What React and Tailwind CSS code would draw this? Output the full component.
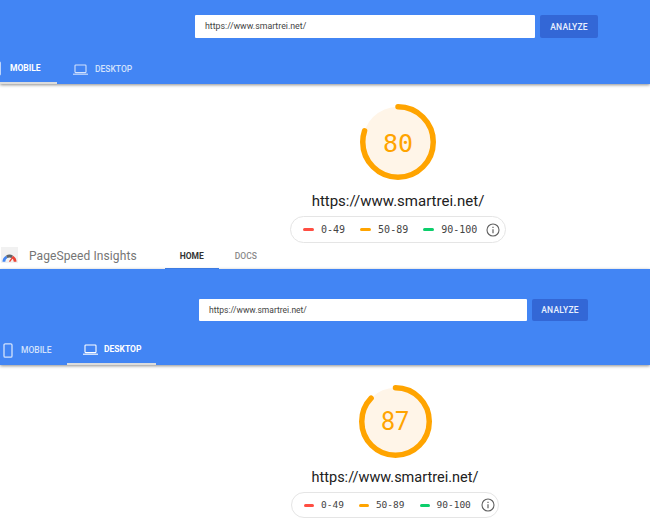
const ROBOTO = { fontFamily: 'Roboto, "Liberation Sans", sans-serif' };

function Phone({ className }) {
  return (
    <svg viewBox="0 0 10 15" className={className} fill="none" stroke="currentColor" strokeWidth="1.3">
      <rect x="1" y="0.8" width="8" height="13.4" rx="1.2" />
    </svg>
  );
}

function Laptop({ className }) {
  return (
    <svg viewBox="0 0 15 11" className={className} fill="none" stroke="currentColor" strokeWidth="1.1">
      <rect x="2" y="1" width="11" height="7.6" rx="0.8" />
      <path d="M0 10.2h15" />
    </svg>
  );
}

function Gauge({ score, size, font, textClass }) {
  const stroke = 5.5;
  const r = (size - stroke) / 2;
  const c = 2 * Math.PI * r;
  return (
    <div className="relative" style={{ width: size, height: size }}>
      <svg width={size} height={size} className="-rotate-90">
        <circle cx={size / 2} cy={size / 2} r={r} fill="#fff5e8" stroke="none" />
        <circle
          cx={size / 2}
          cy={size / 2}
          r={r}
          fill="none"
          stroke="#ffa400"
          strokeWidth={stroke}
          strokeLinecap="round"
          strokeDasharray={`${(c * score) / 100} ${c}`}
        />
      </svg>
      <div
        className={`absolute inset-0 flex items-center justify-center text-[#ffa400] ${textClass}`}
        style={{ fontFamily: font }}
      >
        {score}
      </div>
    </div>
  );
}

function Legend({ width, height, gapA, gapB, infoGap, pad, fontSize, dash }) {
  const mono = { fontFamily: '"DejaVu Sans Mono", monospace', fontSize };
  const item = (color, label) => (
    <div className="flex items-center gap-[7px]">
      <span className="block h-[3px] rounded-full" style={{ backgroundColor: color, width: dash }} />
      <span className="leading-none text-[#444]" style={mono}>{label}</span>
    </div>
  );
  return (
    <div
      className="flex items-center rounded-full border border-[#e5e5e5] bg-white"
      style={{ width, height, paddingLeft: pad }}
    >
      {item('#ff4e42', '0-49')}
      <div style={{ width: gapA }} />
      {item('#ffa400', '50-89')}
      <div style={{ width: gapB }} />
      {item('#0cce6b', '90-100')}
      <div style={{ width: infoGap }} />
      <svg viewBox="0 0 14 14" className="h-[14px] w-[14px] text-[#616161]" fill="none" stroke="currentColor">
        <circle cx="7" cy="7" r="6" strokeWidth="1.1" />
        <path d="M7 6.2v4" strokeWidth="1.2" />
        <path d="M7 3.8v1.2" strokeWidth="1.2" />
      </svg>
    </div>
  );
}

function SearchBand({ inputMl, inputW, btnW, btnGap, topPad, inputH, inputText, tabs }) {
  return (
    <div className="relative z-10 bg-[#4285f4] shadow-[0_1px_3px_rgba(0,0,0,0.45)]" style={ROBOTO}>
      <div className="flex" style={{ paddingTop: topPad, paddingLeft: inputMl }}>
        <div
          className="flex items-center rounded-[1px] bg-white pl-[10px] text-[#444]"
          style={{ width: inputW, height: inputH, fontSize: inputText }}
        >
          https://www.smartrei.net/
        </div>
        <div
          className="flex items-center justify-center rounded-[2px] bg-[#3367d6] pt-px text-[8.5px] font-medium tracking-[0.2px] text-[#e8f0fe]"
          style={{ width: btnW, height: inputH, marginLeft: btnGap }}
        >
          ANALYZE
        </div>
      </div>
      {tabs}
    </div>
  );
}

export default function App() {
  return (
    <div className="h-[532px] w-[650px] overflow-hidden bg-white" style={ROBOTO}>
      <SearchBand
        inputMl={195}
        inputW={340}
        btnW={58}
        btnGap={5}
        topPad={15}
        inputH={23}
        inputText={8.8}
        tabs={
          <div className="mt-[17px] flex h-[29px]">
            <div className="flex w-[57px] items-center overflow-hidden border-b-2 border-[#dcdcdc]">
              <Phone className="-ml-[9px] h-[15px] w-[10px] shrink-0 text-white" />
              <span className="ml-[9px] text-[8.5px] font-bold text-white">MOBILE</span>
            </div>
            <div className="ml-[16px] flex items-center pb-[1px] text-[#d3e2fc]">
              <Laptop className="h-[11px] w-[15px]" />
              <span className="ml-[7px] text-[8.5px] font-medium">DESKTOP</span>
            </div>
          </div>
        }
      />
      <div className="ml-[290px] flex w-[216px] flex-col items-center pt-[20px]">
        <Gauge score={80} size={76} font='"DejaVu Sans Mono", monospace' textClass="pt-[3px] text-[25px]" />
        <div className="mt-[11px] text-[15px] leading-[20px] text-[#212121]">https://www.smartrei.net/</div>
        <div className="mt-[5px]">
          <Legend width={216} height={27} gapA={15} gapB={15} infoGap={9} pad={12} fontSize={10} dash={11} />
        </div>
      </div>

      <div className="mt-[2px] flex h-[24px] items-stretch">
        <div className="ml-[1px] mt-[2px] flex h-[16px] w-[17px] items-end justify-center bg-[#f1f1f1]">
          <svg viewBox="0 0 16 9" className="mb-[1px] h-[9px] w-[15px]" fill="none" strokeWidth="3">
            <path d="M2 9a6 6 0 0 1 3-5.2" stroke="#4285f4" />
            <path d="M5 3.8a6 6 0 0 1 6 0" stroke="#5f6368" />
            <path d="M11 3.8A6 6 0 0 1 14 9" stroke="#ea4335" />
            <path d="M8 9l3-4" stroke="#ea4335" strokeWidth="1.4" />
          </svg>
        </div>
        <div className="ml-[11px] flex items-center pb-[3px] text-[12px] tracking-[0.1px] text-[#757575]">PageSpeed Insights</div>
        <div className="ml-[28px] flex w-[54px] items-center justify-center border-b-[1px] border-[#4285f4] pb-[1px] text-[8.5px] font-bold text-[#333]">HOME</div>
        <div className="ml-[16px] flex items-center pb-[1px] text-[8.5px] font-medium text-[#8a8a8a]">DOCS</div>
      </div>

      <SearchBand
        inputMl={199}
        inputW={328}
        btnW={56}
        btnGap={5}
        topPad={30}
        inputH={22}
        inputText={8.5}
        tabs={
          <div className="mt-[15px] flex h-[29px]">
            <div className="flex w-[67px] items-center pb-[1px] pl-[3px] text-[#d3e2fc]">
              <Phone className="h-[15px] w-[10px]" />
              <span className="ml-[8px] text-[8.5px] font-medium">MOBILE</span>
            </div>
            <div className="flex w-[89px] items-center border-b-2 border-[#dcdcdc] pl-[16px] text-white">
              <Laptop className="h-[11px] w-[15px]" />
              <span className="ml-[6px] text-[8.5px] font-bold">DESKTOP</span>
            </div>
          </div>
        }
      />
      <div className="ml-[291px] flex w-[208px] flex-col items-center pt-[20px]">
        <Gauge score={87} size={73} font="Roboto, sans-serif" textClass="text-[25px] font-normal" />
        <div className="mt-[10px] text-[14.5px] leading-[20px] text-[#212121]">https://www.smartrei.net/</div>
        <div className="mt-[4px]">
          <Legend width={208} height={26} gapA={15} gapB={15} infoGap={10} pad={12} fontSize={9.5} dash={10} />
        </div>
      </div>
    </div>
  );
}
